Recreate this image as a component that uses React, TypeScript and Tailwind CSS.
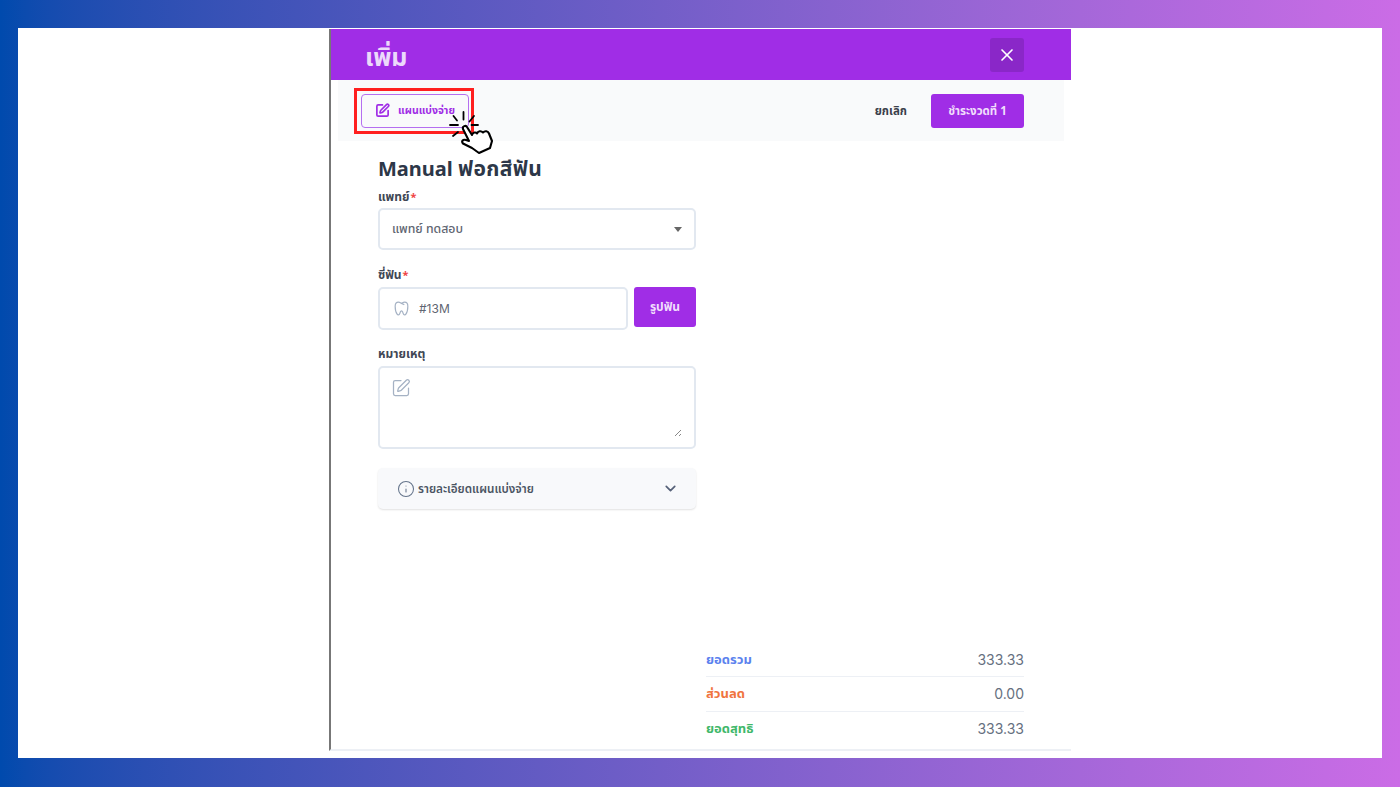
import { SquarePen, X, ChevronDown, Info } from "lucide-react";
import { TbDental } from "react-icons/tb";

const font = "font-['Noto_Sans','Noto_Sans_Thai','Noto_Sans_CJK_SC',sans-serif]";

function Hand() {
  return (
    <svg className="absolute left-[440px] top-[100px]" width="60" height="60" viewBox="0 0 60 60" fill="none" stroke="#000" strokeLinecap="round" strokeLinejoin="round">
      <path strokeWidth="1.8" d="M23.5 12 L23.5 19.5 M10 25 L18 25 M31.5 25 L38 25 M13.5 16 L17 20.5 M34 16 L29.5 21.5 M13 36 L18 32" />
      <path strokeWidth="2.1" fill="#fff" d="M23 29 C22 26 26 25 27 27 L32 35 C33 32 36 32 37 33.5 C38 31 41 30.5 43 32.5 C45 30.5 48 31 49 33.5 L52 41 L50 48 L39 53 L32 48 L23 43.5 C21 41 23 39 26 40 L29 41 Z" />
    </svg>
  );
}

function Label({ text, required }: { text: string; required?: boolean }) {
  return (
    <div className="text-[12px] leading-[18px] font-bold text-[#3f4754]">
      {text}
      {required && <span className="ml-[1px] text-[11px] text-[#ef4444]">*</span>}
    </div>
  );
}

function Row({ label, value, color, border }: { label: string; value: string; color: string; border?: boolean }) {
  return (
    <div className={`flex h-[34.4px] items-center justify-between ${border ? "border-b border-[#edf0f5]" : ""}`}>
      <span className={`text-[13px] font-bold ${color}`}>{label}</span>
      <span className="font-['Inter'] text-[14px] text-[#667080]">{value}</span>
    </div>
  );
}

export default function App() {
  return (
    <div className={`${font} relative flex h-[787px] w-full overflow-hidden bg-gradient-to-r from-[#004aad] to-[#cb6ce6] pb-[29px] pl-[18px] pr-[18px] pt-[28px]`}>
      <div className="flex flex-1 bg-white pl-[311px]">
        <div className="mb-[7px] mt-[1px] flex w-[742px] flex-col border-b-2 border-l-2 border-b-[#edf0f5] border-l-[#777]">
          <div className="flex h-[51px] items-center justify-between bg-[#a02de6] pl-[34px] pr-[47px]">
            <span className="mt-[3px] text-[25px] font-bold leading-none text-[#ecd9fb]">เพิ่ม</span>
            <button className="flex h-[34px] w-[34px] items-center justify-center rounded-[3px] bg-[#8a27c8] text-white">
              <X size={20} strokeWidth={2} />
            </button>
          </div>
          <div className="mx-[7px] flex h-[61px] items-center justify-between bg-[#f9fafb] pl-[23px] pr-[40px]">
            <button className="flex h-[34px] w-[108px] items-center gap-[8px] rounded-[4px] border border-[#b56ff0] pl-[13px] text-[10.5px] font-bold text-[#a02de6]">
              <SquarePen size={15} strokeWidth={2.7} />
              แผนแบ่งจ่าย
            </button>
            <div className="flex items-center gap-[24px]">
              <span className="text-[11.5px] font-bold text-[#3a3f4a]">ยกเลิก</span>
              <button className="h-[34px] w-[93px] rounded-[3px] bg-[#a02de6] text-[11.5px] font-bold text-[#f0defc]">ชำระงวดที่ 1</button>
            </div>
          </div>
          <div className="flex flex-1 flex-col pl-[47px] pr-[47px]">
            <div className="w-[318px]">
              <h1 className="mt-[13px] text-[20px] font-bold leading-[28px] text-[#2d3748]">
                Manual <span className="text-[21px] tracking-[0.4px]">ฟอกสีฟัน</span>
              </h1>
              <div className="mt-[5px]"><Label text="แพทย์" required /></div>
              <div className="mt-[2px] flex h-[42px] items-center justify-between rounded-[5px] border-2 border-[#e2e8f0] pl-[12px] pr-[12px] text-[12.3px] font-medium text-[#5f6672]">
                แพทย์ ทดสอบ
                <span className="h-0 w-0 border-x-[4.5px] border-t-[5px] border-x-transparent border-t-[#666]" />
              </div>
              <div className="mt-[16px]"><Label text="ซี่ฟัน" required /></div>
              <div className="mt-[3px] flex gap-[6px]">
                <div className="flex h-[43px] w-[250px] items-center rounded-[5px] border-2 border-[#e2e8f0] pl-[12px] font-['Inter'] text-[12px] text-[#5f6672]">
                  <TbDental size={19} strokeWidth={1.5} className="text-[#a5b2c4]" />
                  <span className="ml-[8px]">#13M</span>
                </div>
                <button className="h-[40px] w-[62px] rounded-[3px] bg-[#a02de6] text-[12px] font-bold text-[#f0defc]">รูปฟัน</button>
              </div>
              <div className="mt-[15px]"><Label text="หมายเหตุ" /></div>
              <div className="relative mt-[3px] h-[83px] rounded-[5px] border-2 border-[#e2e8f0] pl-[11px] pt-[10px]">
                <SquarePen size={20} strokeWidth={1.5} className="text-[#a5b2c4]" />
                <svg className="absolute bottom-[10px] right-[12px]" width="8" height="8" viewBox="0 0 8 8" stroke="#888">
                  <path d="M1 7 L7 1 M5 7 L7 5" />
                </svg>
              </div>
              <div className="mt-[19px] flex h-[41px] items-center justify-between rounded-[5px] bg-[#f8f9fb] pl-[19px] pr-[17px] shadow-[0_1px_2px_rgba(0,0,0,0.12)]">
                <div className="flex items-center gap-[3px] text-[11.7px] font-semibold text-[#4b5563]">
                  <Info size={18} strokeWidth={1.4} className="text-[#64748b]" />
                  รายละเอียดแผนแบ่งจ่าย
                </div>
                <ChevronDown size={17} strokeWidth={2.4} className="text-[#566178]" />
              </div>
            </div>
            <div className="mb-[3px] mt-auto ml-[328px] w-[318px]">
              <Row label="ยอดรวม" value="333.33" color="text-[#5b82ee]" border />
              <Row label="ส่วนลด" value="0.00" color="text-[#f0743e]" border />
              <Row label="ยอดสุทธิ" value="333.33" color="text-[#3fb86a]" />
            </div>
          </div>
        </div>
      </div>
      <div className="absolute left-[354px] top-[88px] h-[46px] w-[120px] border-[3px] border-[#ff1f1f]" />
      <Hand />
    </div>
  );
}
